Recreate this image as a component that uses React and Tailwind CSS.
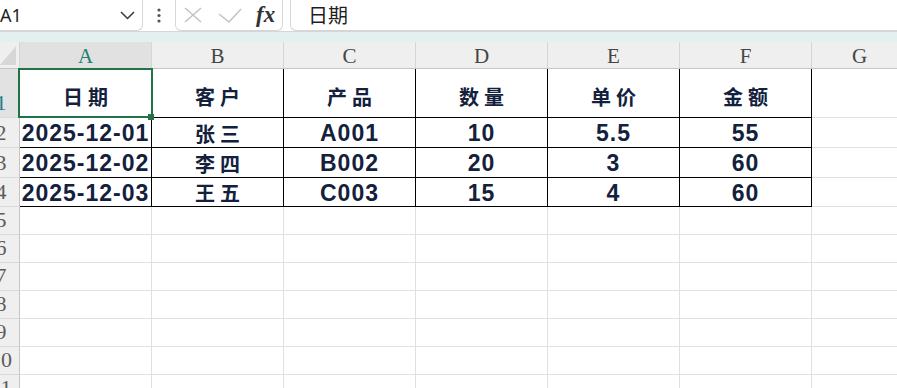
import React from "react";

const columns = ["A", "B", "C", "D", "E", "F"];

const rows = [
  { n: 1, h: "h-[49px]", cells: ["日期", "客户", "产品", "数量", "单价", "金额"] },
  { n: 2, h: "h-[30px]", cells: ["2025-12-01", "张三", "A001", "10", "5.5", "55"] },
  { n: 3, h: "h-[30px]", cells: ["2025-12-02", "李四", "B002", "20", "3", "60"] },
  { n: 4, h: "h-[29px]", cells: ["2025-12-03", "王五", "C003", "15", "4", "60"] },
];

const emptyRows = [5, 6, 7, 8, 9, 10, 11];

const isCjk = (s) => /[\u4e00-\u9fff]/.test(s);

function RowHeader({ n, selected, height }) {
  return (
    <div
      className={`${height} w-[20px] shrink-0 overflow-hidden flex items-end border-r border-b border-r-[#c4c4c4] border-b-[#d9d9d9] ${
        selected ? "bg-[#e2e2e2] text-[#1f7f86]" : "bg-[#efefef] text-[#5c5c5c]"
      }`}
    >
      <div className="w-[40px] ml-[-19px] shrink-0 text-center font-['Liberation_Serif',serif] text-[22px] leading-[22px] pb-[3px]">
        {n}
      </div>
    </div>
  );
}

function DataCell({ text, header }) {
  const cjk = isCjk(text);
  return (
    <div
      className={`w-[132px] shrink-0 h-full flex items-center justify-center border-r border-b border-black text-[#13213d] font-bold ${
        header ? "pt-[7px]" : "pt-[2px]"
      }`}
    >
      {cjk ? (
        <span className="font-['Noto_Sans_CJK_SC',sans-serif] text-[20px] tracking-[5px] pl-[5px]">
          {text}
        </span>
      ) : (
        <span className="font-['Liberation_Sans',sans-serif] text-[23px] tracking-[1px]">
          {text}
        </span>
      )}
    </div>
  );
}

function Toolbar() {
  return (
    <div className="flex h-[31px] bg-white">
      {/* name box */}
      <div className="w-[143px] shrink-0 h-full flex items-center justify-between pr-[7px] border-r border-b border-[#d6d6d6] rounded-br-[6px]">
        <span className="font-['Noto_Sans',sans-serif] text-[18px] text-[#1f1f1f] leading-none">A1</span>
        <svg width="15" height="9" viewBox="0 0 15 9">
          <polyline points="1,1 7.5,7.5 14,1" fill="none" stroke="#3a3a3a" strokeWidth="1.5" />
        </svg>
      </div>
      <div className="w-[32px] shrink-0 flex items-center justify-center">
        <svg width="4" height="15" viewBox="0 0 4 15">
          <circle cx="2" cy="2" r="1.6" fill="#555" />
          <circle cx="2" cy="7.5" r="1.6" fill="#555" />
          <circle cx="2" cy="13" r="1.6" fill="#555" />
        </svg>
      </div>
      {/* cancel / enter / fx */}
      <div className="w-[108px] shrink-0 h-full flex items-center pl-[8px] border-x border-b border-[#d6d6d6] rounded-b-[6px]">
        <svg width="18" height="16" viewBox="0 0 18 16">
          <line x1="1" y1="1" x2="17" y2="15" stroke="#c2c2c2" strokeWidth="1.5" />
          <line x1="17" y1="1" x2="1" y2="15" stroke="#c2c2c2" strokeWidth="1.5" />
        </svg>
        <svg width="24" height="15" viewBox="0 0 24 15" className="ml-[16px]">
          <polyline points="1,6 11,14 23,1" fill="none" stroke="#c2c2c2" strokeWidth="1.5" />
        </svg>
        <span className="ml-[14px] font-['Liberation_Serif',serif] italic font-bold text-[23px] leading-none text-[#333] pb-[2px]">
          fx
        </span>
      </div>
      <div className="w-[7px] shrink-0" />
      {/* formula bar */}
      <div className="flex-1 h-full flex items-center pl-[17px] border-l border-b border-[#d6d6d6] rounded-bl-[6px]">
        <span className="font-['Noto_Sans_CJK_SC',sans-serif] text-[20px] text-[#1f1f1f] leading-none">日期</span>
      </div>
    </div>
  );
}

export default function App() {
  return (
    <div className="relative w-[897px] h-[388px] overflow-hidden bg-white">
      <Toolbar />
      <div className="h-[11px] bg-[#e4f0ef] border-t border-[#d6d6d6]" />

      {/* column headers */}
      <div className="flex h-[27px] bg-[#efefef] border-b border-[#c6c6c6]">
        <div className="w-[20px] shrink-0 flex items-end justify-end pr-[3px] pb-[3px] border-r border-[#d4d4d4]">
          <svg width="16" height="19" viewBox="0 0 16 19">
            <polygon points="16,0 16,19 0,19" fill="#d7d7d7" />
          </svg>
        </div>
        {columns.map((c, i) => (
          <div
            key={c}
            className={`w-[132px] shrink-0 flex items-end justify-center pb-[1px] border-r border-[#d6d6d6] font-['Liberation_Serif',serif] text-[21px] leading-[22px] ${
              i === 0 ? "bg-[#e1e1e1] text-[#1f7d73]" : "text-[#454545]"
            }`}
          >
            {c}
          </div>
        ))}
        <div className="flex-1 flex items-end justify-start pl-[40px] pb-[1px] font-['Liberation_Serif',serif] text-[21px] leading-[22px] text-[#454545]">
          G
        </div>
      </div>

      {/* table rows */}
      {rows.map((r) => (
        <div key={r.n} className={`flex ${r.h}`}>
          <RowHeader n={r.n} selected={r.n === 1} height={r.h} />
          {r.cells.map((t, i) => (
            <DataCell key={i} text={t} header={r.n === 1} />
          ))}
          <div className="flex-1 h-full border-b border-[#e0e0e0]" />
        </div>
      ))}

      {/* empty rows */}
      {emptyRows.map((n) => (
        <div key={n} className="flex h-[28px]">
          <RowHeader n={n} height="h-[28px]" />
          {columns.map((c) => (
            <div key={c} className="w-[132px] shrink-0 h-full border-r border-b border-[#e0e0e0]" />
          ))}
          <div className="flex-1 h-full border-b border-[#e0e0e0]" />
        </div>
      ))}

      {/* active cell A1 */}
      <div className="absolute left-[18px] top-[68px] w-[135px] h-[50px] border-2 border-[#217346] pointer-events-none" />
      <div className="absolute left-[148px] top-[114px] w-[6px] h-[6px] bg-[#217346]" />
    </div>
  );
}
